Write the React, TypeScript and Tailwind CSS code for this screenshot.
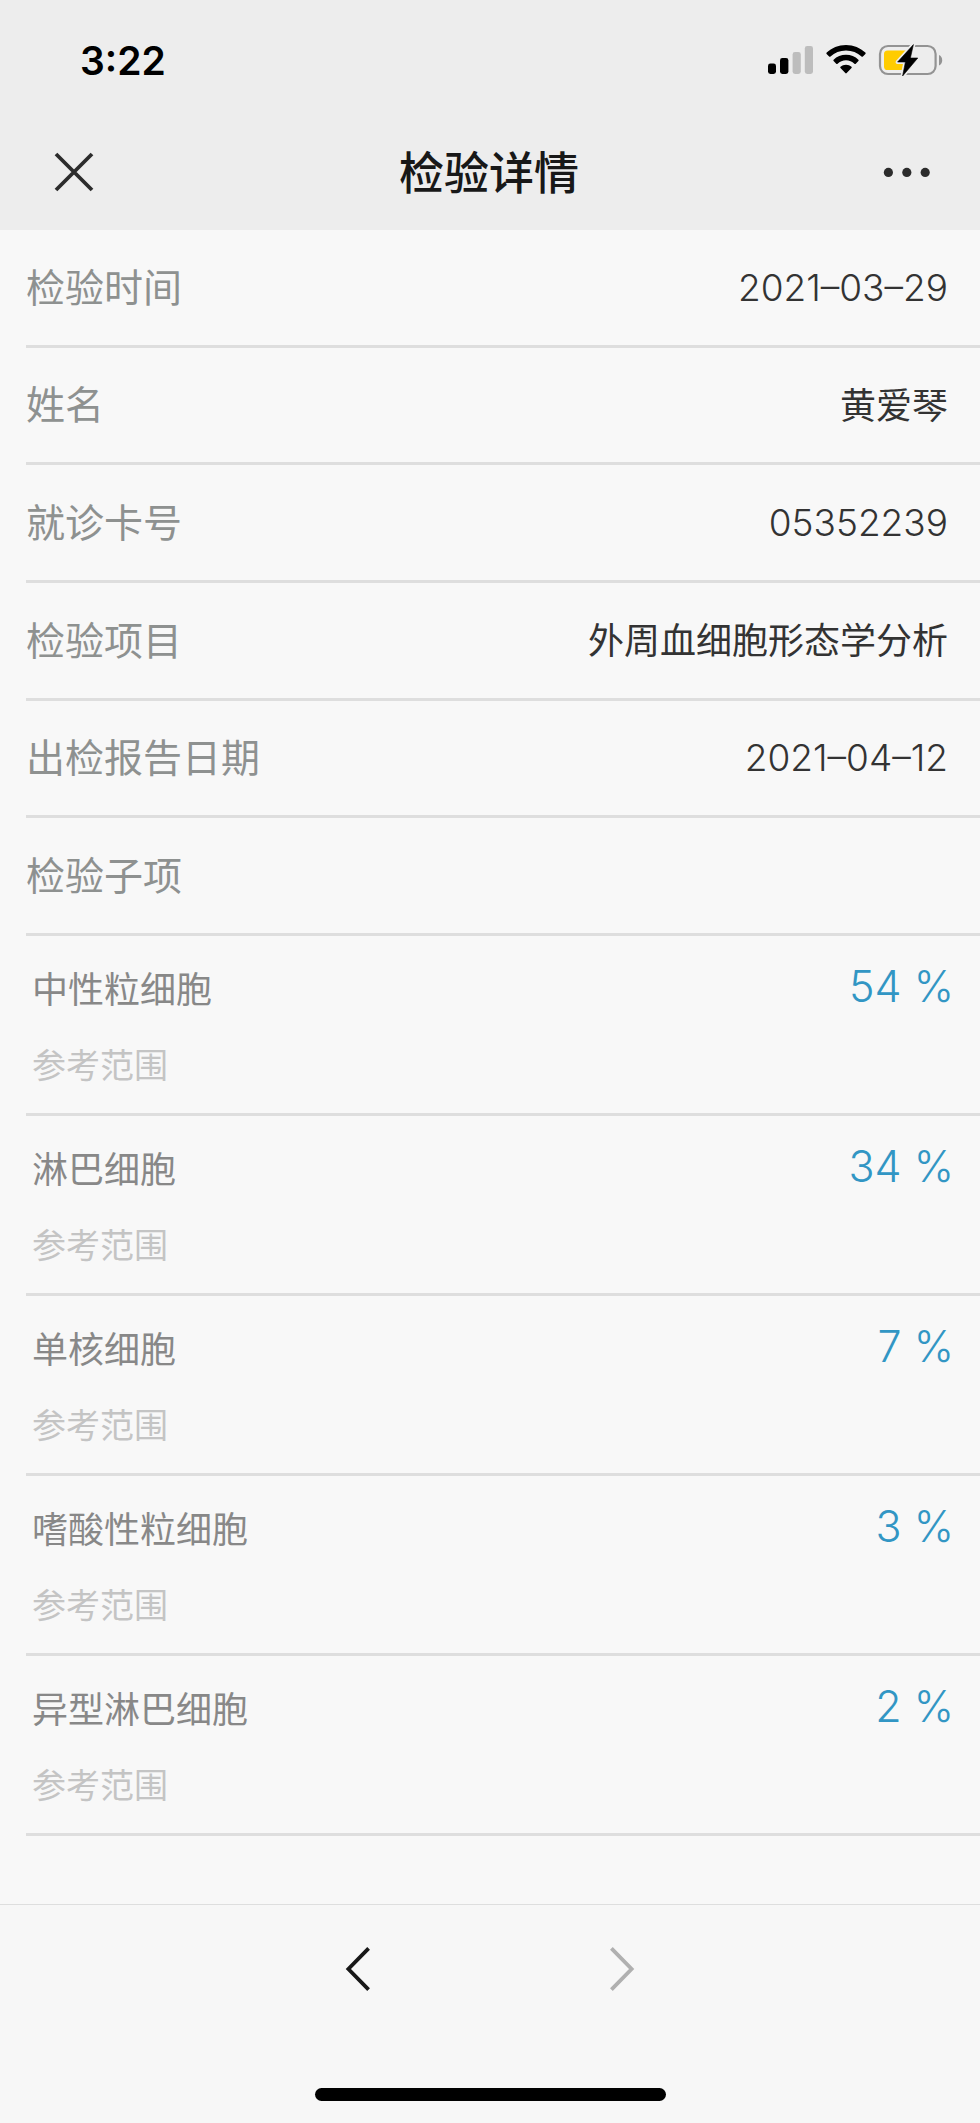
const details = [
  { label: '检验时间', value: '2021–03–29' },
  { label: '姓名', value: '黄爱琴' },
  { label: '就诊卡号', value: '05352239' },
  { label: '检验项目', value: '外周血细胞形态学分析' },
  { label: '出检报告日期', value: '2021–04–12' },
  { label: '检验子项', value: '' },
];

const results = [
  { name: '中性粒细胞', value: 54 },
  { name: '淋巴细胞', value: 34 },
  { name: '单核细胞', value: 7 },
  { name: '嗜酸性粒细胞', value: 3 },
  { name: '异型淋巴细胞', value: 2 },
];

function SignalIcon() {
  return (
    <svg width="45" height="30" viewBox="0 0 45 30">
      <rect x="0" y="18.5" width="8" height="10.5" rx="2.4" fill="#000" />
      <rect x="12" y="13" width="8.4" height="16" rx="2.4" fill="#000" />
      <rect x="24.6" y="7" width="8.2" height="22" rx="2.4" fill="#bdbdbd" />
      <rect x="36.8" y="1" width="8.2" height="28" rx="2.4" fill="#bdbdbd" />
    </svg>
  );
}

function WifiIcon() {
  return (
    <svg width="40" height="30" viewBox="0 0 40 30">
      <path d="M20 0C27.6 0 34.4 2.9 39.3 7.6C39.8 8 39.8 8.6 39.4 9L36.9 11.5C36.5 11.9 35.9 11.9 35.5 11.5C31.4 7.7 26 5.5 20 5.5S8.6 7.7 4.5 11.5C4.1 11.9 3.5 11.9 3.1 11.5L0.6 9C0.2 8.6 0.2 8 0.7 7.6C5.6 2.9 12.4 0 20 0Z" />
      <path d="M20 9.8C24.8 9.8 29.2 11.6 32.4 14.7C32.8 15.1 32.8 15.7 32.4 16.1L29.8 18.7C29.4 19.1 28.8 19.1 28.4 18.7C26.2 16.6 23.2 15.3 20 15.3S13.8 16.6 11.6 18.7C11.2 19.1 10.6 19.1 10.2 18.7L7.6 16.1C7.2 15.7 7.2 15.1 7.6 14.7C10.8 11.6 15.2 9.8 20 9.8Z" />
      <path d="M20 19.7C22.1 19.7 24 20.5 25.5 21.8C25.9 22.2 25.9 22.7 25.5 23.1L20.7 28.1C20.3 28.5 19.7 28.5 19.3 28.1L14.5 23.1C14.1 22.7 14.1 22.2 14.5 21.8C16 20.5 17.9 19.7 20 19.7Z" />
    </svg>
  );
}

function BatteryIcon() {
  const bolt = 'M34.4 -0.4L18.6 17H26.4L23.6 31L38.8 13H31.4Z';
  return (
    <svg width="64" height="30" viewBox="0 0 64 30" className="overflow-visible">
      <rect x="1" y="1" width="55.6" height="28" rx="8" fill="none" stroke="#939393" strokeWidth="2.2" />
      <path d="M60 10C62 10.8 63.2 12.6 63.2 15.2S62 19.6 60 20.4Z" fill="#939393" />
      <rect x="5" y="5.4" width="25" height="19.6" rx="3.6" fill="#ffcc00" />
      <path d={bolt} fill="#ededed" stroke="#ededed" strokeWidth="4" strokeLinejoin="round" />
      <path d={bolt} fill="#000" stroke="#000" strokeWidth="0.6" strokeLinejoin="round" />
    </svg>
  );
}

function StatusBar() {
  return (
    <div className="flex h-[120px] items-center justify-between pr-[37px] pl-20">
      <span className="text-[39px] leading-none font-semibold text-black">3:22</span>
      <div className="flex items-center gap-[13px]">
        <SignalIcon />
        <WifiIcon />
        <BatteryIcon />
      </div>
    </div>
  );
}

function NavBar() {
  return (
    <div className="mb-1.5 grid h-[104px] grid-cols-[1fr_auto_1fr] items-center pr-[50px] pl-12">
      <button type="button" aria-label="关闭" className="justify-self-start">
        <svg width="48" height="48" viewBox="0 0 48 48" fill="none" stroke="#2c2c2c" strokeWidth="3.8">
          <path d="M8 6L44 42M44 6L8 42" />
        </svg>
      </button>
      <h1 className="pt-0.5 text-[45px] leading-none font-medium text-[#181818]">检验详情</h1>
      <button type="button" aria-label="更多" className="justify-self-end">
        <svg width="48" height="48" viewBox="0 0 48 48" fill="#2c2c2c">
          <circle cx="6.4" cy="24.4" r="4.6" />
          <circle cx="24.8" cy="24.4" r="4.6" />
          <circle cx="43.2" cy="24.4" r="4.6" />
        </svg>
      </button>
    </div>
  );
}

export default function App() {
  return (
    <div className="flex min-h-screen flex-col bg-[#f8f8f8] font-[Inter,'Noto_Sans_CJK_SC',sans-serif]">
      <header className="bg-[#ededed]">
        <StatusBar />
        <NavBar />
      </header>

      <main className="flex-1 pl-[26px]">
        <dl className="grid min-h-[706px] auto-rows-fr">
          {details.map((item) => (
            <div
              key={item.label}
              className="flex items-center justify-between border-b-3 border-[#dedede] pr-8"
            >
              <dt className="text-[39px] leading-none text-[#8e9190]">{item.label}</dt>
              <dd
                className={`leading-none text-[#333] ${
                  /^\d/.test(item.value) ? 'text-[37px] font-light' : 'pt-0.5 text-[36px]'
                }`}
              >
                {item.value}
              </dd>
            </div>
          ))}
        </dl>

        <ul>
          {results.map((result) => (
            <li
              key={result.name}
              className="flex flex-col gap-6 border-b-3 border-[#dedede] pt-7 pr-[26px] pb-[21px] pl-1.5"
            >
              <div className="flex items-start justify-between">
                <span className="text-[36px] leading-[52px] text-[#888]">{result.name}</span>
                <span className="text-[43px] leading-[44px] font-light whitespace-pre text-[#3296c4]">
                  {result.value} %
                </span>
              </div>
              <p className="text-[34px] leading-[52px] text-[#c4c4c4]">参考范围</p>
            </li>
          ))}
        </ul>
      </main>

      <footer className="border-t border-[#dedede] bg-[#f7f7f7]">
        <nav className="flex justify-center gap-[216px] pt-10">
          <button type="button" aria-label="后退">
            <svg width="48" height="48" viewBox="0 0 48 48" fill="none" stroke="#181818" strokeWidth="3.8">
              <path d="M34.6 3.4L14.4 24L34.6 44.6" />
            </svg>
          </button>
          <button type="button" aria-label="前进" disabled>
            <svg width="48" height="48" viewBox="0 0 48 48" fill="none" stroke="#b0b0b0" strokeWidth="3.8">
              <path d="M13.4 3.4L33.6 24L13.4 44.6" />
            </svg>
          </button>
        </nav>
        <div className="mx-auto mt-[95px] mb-[22px] h-[13px] w-[351px] rounded-full bg-black" />
      </footer>
    </div>
  );
}
